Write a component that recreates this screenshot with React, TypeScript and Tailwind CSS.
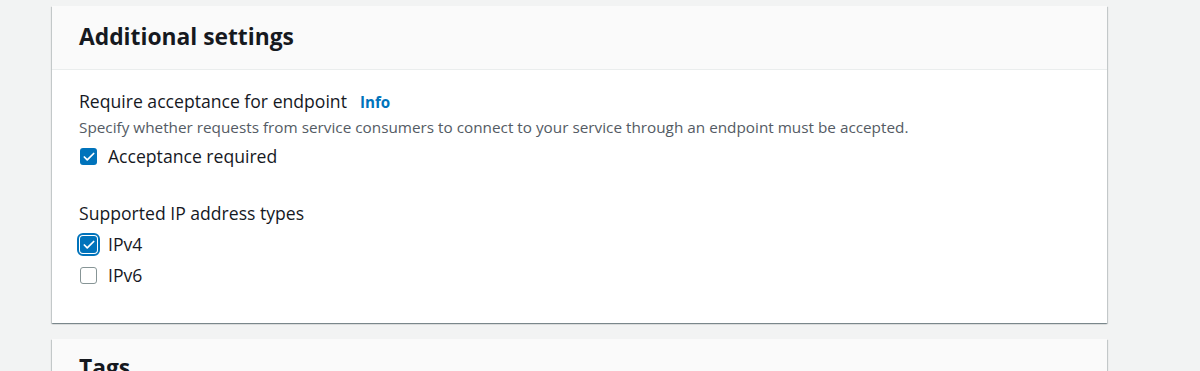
import { Check } from 'lucide-react';

interface BoxProps {
  label: string;
  checked?: boolean;
  focused?: boolean;
}

const cardShadow =
  'shadow-[0_1px_1px_0_rgba(0,28,36,0.3),1px_1px_1px_0_rgba(0,28,36,0.15),-1px_1px_1px_0_rgba(0,28,36,0.15)]';

const Checkbox = ({ label, checked, focused }: BoxProps) => (
  <label className="flex items-center h-[31px] text-[17.6px] text-[#16191f]">
    <span
      className={`flex items-center justify-center size-[17px] ml-[1px] mr-[11px] rounded-[3px] ${
        focused ? 'outline-2 outline-offset-1 outline-[#0073bb]' : ''
      } ${checked ? 'bg-[#0073bb]' : 'bg-white border border-[#879596]'}`}
    >
      {checked && <Check size={14} strokeWidth={3} className="text-white" />}
    </span>
    {label}
  </label>
);

const App = () => {
  return (
    <div
      className="h-[371px] overflow-hidden bg-[#f2f3f3] pl-[52px] pt-[6px]"
      style={{ fontFamily: '"Open Sans", "Noto Sans", sans-serif' }}
    >
      <section className={`w-[1055px] bg-white ${cardShadow}`}>
        <header className="h-[64px] flex items-center px-[27px] bg-[#fafafa] border-b border-[#eaeded]">
          <h2 className="text-[22.8px] font-bold text-[#16191f]">Additional settings</h2>
        </header>
        <div className="px-[27px] pt-[19px] pb-[32px]">
          <div className="flex items-baseline gap-[13px] text-[17.6px] text-[#16191f] leading-[24px]">
            Require acceptance for endpoint
            <a className="text-[15.2px] font-bold text-[#0073bb]">Info</a>
          </div>
          <p className="mt-[2px] text-[15.3px] text-[#545b64] leading-[22px]">
            Specify whether requests from service consumers to connect to your service through an
            endpoint must be accepted.
          </p>
          <div className="mt-[3px]">
            <Checkbox label="Acceptance required" checked />
          </div>
          <div className="mt-[29px] mb-[4px] text-[17.6px] text-[#16191f] leading-[24px]">
            Supported IP address types
          </div>
          <Checkbox label="IPv4" checked focused />
          <Checkbox label="IPv6" />
        </div>
      </section>
      <section className={`mt-[16px] w-[1055px] bg-[#fafafa] ${cardShadow}`}>
        <header className="h-[64px] flex items-center px-[27px]">
          <h2 className="text-[22.8px] font-bold text-[#16191f] -mt-[6px]">Tags</h2>
        </header>
      </section>
    </div>
  );
};

export default App;
